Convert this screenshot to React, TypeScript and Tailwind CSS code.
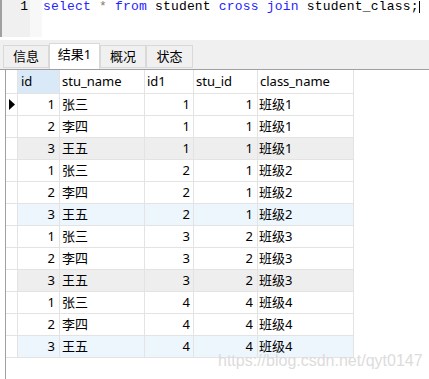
const rows = [
  { id: 1, name: '张三', id1: 1, sid: 1, cls: '班级1' },
  { id: 2, name: '李四', id1: 1, sid: 1, cls: '班级1' },
  { id: 3, name: '王五', id1: 1, sid: 1, cls: '班级1' },
  { id: 1, name: '张三', id1: 2, sid: 1, cls: '班级2' },
  { id: 2, name: '李四', id1: 2, sid: 1, cls: '班级2' },
  { id: 3, name: '王五', id1: 2, sid: 1, cls: '班级2' },
  { id: 1, name: '张三', id1: 3, sid: 2, cls: '班级3' },
  { id: 2, name: '李四', id1: 3, sid: 2, cls: '班级3' },
  { id: 3, name: '王五', id1: 3, sid: 2, cls: '班级3' },
  { id: 1, name: '张三', id1: 4, sid: 4, cls: '班级4' },
  { id: 2, name: '李四', id1: 4, sid: 4, cls: '班级4' },
  { id: 3, name: '王五', id1: 4, sid: 4, cls: '班级4' },
];

const cell = 'h-full border-r border-[#e3e3e3] flex items-center';
const mono = { fontFamily: '"Liberation Mono", "Courier New", monospace' };

function Tab({ label, active, w }: { label: string; active?: boolean; w: string }) {
  if (active) {
    return (
      <div className={`${w} h-[26px] bg-white border border-b-0 border-[#d9d9d9] flex items-center justify-center pb-[3px]`}>
        {label}
      </div>
    );
  }
  return (
    <div className={`${w} h-[23px] mb-[1px] bg-[#f0f0f0] border border-[#d9d9d9] flex items-center justify-center`}>
      {label}
    </div>
  );
}

export default function App() {
  return (
    <div
      className="relative w-[429px] h-[379px] bg-white overflow-hidden text-[13px] text-black"
      style={{ fontFamily: '"Noto Sans", "Noto Sans CJK SC", sans-serif' }}
    >
      {/* SQL editor */}
      <div className="h-[37px] flex border-l-2 border-[#a0a0a0]">
        <div className="w-[28px] bg-[#f0f0f0] text-right pr-[2px] leading-[14px]" style={mono}>
          1
        </div>
        <div className="w-[12px] bg-[#f8f8f8]"></div>
        <div className="pl-[1px] leading-[14px] tracking-[0.19px] whitespace-pre flex items-start" style={mono}>
          <span className="text-[#2424ff]">select</span>
          <span> </span>
          <span className="text-[#8a7a6a]">*</span>
          <span> </span>
          <span className="text-[#2424ff]">from</span>
          <span> student </span>
          <span className="text-[#2424ff]">cross</span>
          <span> </span>
          <span className="text-[#2424ff]">join</span>
          <span> student_class;</span>
          <span className="w-px h-[12px] bg-black mt-[1px]"></span>
        </div>
      </div>
      <div className="h-[3px]"></div>

      {/* result tabs */}
      <div className="h-[30px] bg-[#f0f0f0] border-b border-[#a0a0a0] flex items-end pl-[3px]">
        <Tab label="信息" w="w-[46px]" />
        <Tab label="结果1" w="w-[51px]" active />
        <Tab label="概况" w="w-[46px]" />
        <Tab label="状态" w="w-[47px]" />
      </div>

      {/* grid */}
      <div className="ml-[5px] border-l border-[#a0a0a0] h-[310px]">
        <div className="flex h-[24px] border-b border-[#e3e3e3] w-[348px]">
          <div className={`w-[12px] ${cell}`}></div>
          <div className={`w-[42px] ${cell} bg-[#d9e9f7] pl-[3px]`}>id</div>
          <div className={`w-[85px] ${cell} pl-[2px]`}>stu_name</div>
          <div className={`w-[49px] ${cell} pl-[2px]`}>id1</div>
          <div className={`w-[64px] ${cell} pl-[2px]`}>stu_id</div>
          <div className={`w-[96px] ${cell} pl-[2px]`}>class_name</div>
        </div>
        {rows.map((r, i) => {
          const bg = i % 6 === 2 ? 'bg-[#eeeeee]' : i % 6 === 5 ? 'bg-[#edf5fd]' : 'bg-white';
          return (
            <div key={i} className="flex h-[22px] border-b border-[#e3e3e3] w-[348px]">
              <div className={`w-[12px] ${cell} justify-center`}>
                {i === 0 && (
                  <svg width="6" height="11" viewBox="0 0 6 11">
                    <polygon points="0,0 6,5.5 0,11" fill="#000" />
                  </svg>
                )}
              </div>
              <div className={`w-[42px] ${cell} ${bg} justify-end pr-[4px]`}>{r.id}</div>
              <div className={`w-[85px] ${cell} ${bg} pl-[2px]`}>{r.name}</div>
              <div className={`w-[49px] ${cell} ${bg} justify-end pr-[3px]`}>{r.id1}</div>
              <div className={`w-[64px] ${cell} ${bg} justify-end pr-[4px]`}>{r.sid}</div>
              <div className={`w-[96px] ${cell} ${bg} pl-[1px]`}>{r.cls}</div>
            </div>
          );
        })}
      </div>

      {/* watermark */}
      <div
        className="absolute left-[218px] top-[352px] text-[16px] leading-[18px] text-[#dcdcdc] whitespace-nowrap"
        style={{ fontFamily: '"Liberation Sans", Arial, sans-serif' }}
      >
        https://blog.csdn.net/qyt0147
      </div>
    </div>
  );
}
